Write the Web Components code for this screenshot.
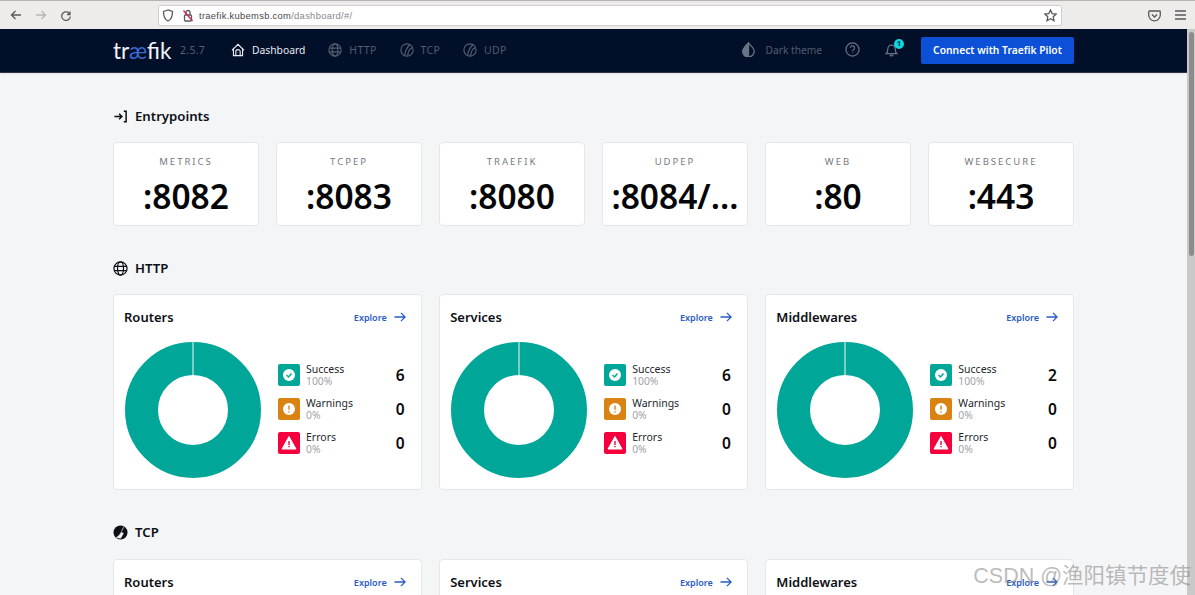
<!DOCTYPE html>
<html lang="en">
<head>
<meta charset="utf-8">
<title>Traefik</title>
<style>
html, body { margin:0; height:595px; overflow:hidden; }
body { font-family:"Noto Sans","Liberation Sans",sans-serif; background:#f4f5f7; display:flex; flex-direction:column; position:relative; }
.page { flex:1; display:flex; min-height:0; }
.scroller { flex:1; min-width:0; overflow:hidden; }
.wrap { width:961px; margin:0 auto; }
.row6 { display:grid; grid-template-columns:repeat(6,1fr); gap:17px; margin-bottom:32px; }
.row3 { display:grid; grid-template-columns:repeat(3,1fr); gap:17.5px; margin-bottom:32px; }
</style>
</head>
<body>
<browser-bar url-host="traefik.kubemsb.com" url-path="/dashboard/#/"></browser-bar>
<div class="page">
  <div class="scroller">
    <app-header></app-header>
    <div class="wrap">
      <section-title icon="entry" style="margin-top:33px">Entrypoints</section-title>
      <div class="row6">
        <entry-card name="METRICS" value=":8082"></entry-card>
        <entry-card name="TCPEP" value=":8083"></entry-card>
        <entry-card name="TRAEFIK" value=":8080"></entry-card>
        <entry-card name="UDPEP" value=":8084/…"></entry-card>
        <entry-card name="WEB" value=":80"></entry-card>
        <entry-card name="WEBSECURE" value=":443"></entry-card>
      </div>
      <section-title icon="globe">HTTP</section-title>
      <div class="row3">
        <stat-card title="Routers" ok="6"></stat-card>
        <stat-card title="Services" ok="6"></stat-card>
        <stat-card title="Middlewares" ok="2"></stat-card>
      </div>
      <section-title icon="tcp" style="margin-bottom:17px">TCP</section-title>
      <div class="row3">
        <stat-card title="Routers" ok="6"></stat-card>
        <stat-card title="Services" ok="6"></stat-card>
        <stat-card title="Middlewares" ok="2"></stat-card>
      </div>
    </div>
  </div>
  <page-scrollbar></page-scrollbar>
</div>
<water-mark>CSDN @渔阳镇节度使</water-mark>

<script>
const ball = '<circle cx="8" cy="8" r="7"/><path d="M11.300 2C8 5 5.800 9 5.300 14.400M13.800 5.500C10.800 7 9 10 8.800 14.800"/>';
const icons = {
  home: '<path d="M1.200 8.300 8 1.500l6.800 6.800M2.800 6.800v7.700h10.400V6.800M5.500 14.500V10a2.500 2.500 0 0 1 5 0v4.500"/>',
  globe: '<circle cx="8" cy="8" r="7"/><ellipse cx="8" cy="8" rx="3.200" ry="7"/><path d="M1.300 5.800h13.400M1.300 10.200h13.400"/>',
  tcp: ball,
  udp: ball,
  help: '<circle cx="8" cy="8" r="7"/><path d="M5.800 6.200a2.200 2.200 0 1 1 3.300 2c-.8.400-1.100.9-1.100 1.700M8 11.300v.8"/>',
  bell: '<path d="M2.500 12.300c1.200-1 1.600-2.300 1.600-5a3.900 3.900 0 0 1 7.800 0c0 2.700.4 4 1.600 5zM6.300 13.600a1.800 1.800 0 0 0 3.400 0"/>'
};

class BrowserBar extends HTMLElement {
  constructor() {
    super();
    const root = this.attachShadow({ mode: 'open' });
    root.innerHTML = `
    <style>
    :host { display:flex; align-items:center; height:29px; box-sizing:border-box; background:#edecea; border-top:1px solid #b4b4b4; flex:none; }
    svg { display:block; fill:none; stroke:#5a5a5c; stroke-width:1.300; flex:none; }
    .nav { display:flex; align-items:center; gap:13px; margin-left:10px; width:148px; }
    .url { width:904px; height:21px; box-sizing:border-box; background:#fff; border:1px solid #cfcfcf; border-radius:2px; display:flex; align-items:center; padding:0 4px 0 3px; font:9.400px "Liberation Sans",sans-serif; color:#88888b; }
    .url b { font-weight:400; color:#47474a; }
    .addr { margin-left:5px; flex:1; letter-spacing:.3px; }
    .tools { display:flex; align-items:center; margin-left:86px; gap:14px; }
    </style>
    <div class="nav">
      <svg width="12" height="12" viewBox="0 0 12 12"><path d="M11 6H1.500M5.500 2 1.500 6l4 4"/></svg>
      <svg width="12" height="12" viewBox="0 0 12 12" style="stroke:#b5b5b5"><path d="M1 6h9.500M6.500 2l4 4-4 4"/></svg>
      <svg width="12" height="12" viewBox="0 0 12 12"><path d="M10 2.500v3H7M10 5.500A4.300 4.300 0 1 0 10.300 7.500"/></svg>
    </div>
    <div class="url">
      <svg width="12" height="13" viewBox="0 0 12 13"><path d="M6 1 1.500 2.500c0 5 1 8 4.500 9.500 3.500-1.500 4.500-4.500 4.500-9.500z"/></svg>
      <svg width="12" height="13" viewBox="0 0 12 13" style="margin-left:8px"><rect x="2.500" y="6" width="7" height="6" rx="1"/><path d="M4 6V3.500a2 2 0 0 1 4 0V6"/><path d="M1.500 1.500 10.500 12" style="stroke:#d7264d"/></svg>
      <span class="addr"><b>${this.getAttribute('url-host')}</b>${this.getAttribute('url-path')}</span>
      <svg width="13" height="13" viewBox="0 0 13 13"><path d="m6.500 1 1.700 3.600 3.900.5-2.900 2.700.8 3.900-3.500-2-3.500 2 .8-3.900L.900 5.100l3.900-.5z"/></svg>
    </div>
    <div class="tools">
      <svg width="13" height="13" viewBox="0 0 13 13"><path d="M1.500 2h10a.8.8 0 0 1 .8.8V6a5.800 5.800 0 0 1-11.600 0V2.800a.8.8 0 0 1 .8-.8zM4 5.500 6.500 8 9 5.500"/></svg>
      <svg width="11" height="12" viewBox="0 0 11 12"><path d="M0 2h11M0 6h11M0 10h11"/></svg>
    </div>`;
  }
}
customElements.define('browser-bar', BrowserBar);

class NavItem extends HTMLElement {
  constructor() {
    super();
    const root = this.attachShadow({ mode: 'open' });
    root.innerHTML = `
    <style>
    :host { display:inline-flex; align-items:center; gap:7px; font-size:10.500px; letter-spacing:.3px; color:#525d6e; }
    :host([active]) { color:#e9ecf1; font-size:10.300px; letter-spacing:0; }
    svg { width:14px; height:14px; fill:none; stroke:currentColor; stroke-width:1.300; flex:none; }
    </style>
    <svg viewBox="0 0 16 16">${icons[this.getAttribute('icon')]}</svg><slot></slot>`;
  }
}
customElements.define('nav-item', NavItem);

class AppHeader extends HTMLElement {
  constructor() {
    super();
    const root = this.attachShadow({ mode: 'open' });
    root.innerHTML = `
    <style>
    :host { display:block; height:44px; box-sizing:border-box; background:#010f29; border-bottom:1px solid #2b3547; box-shadow:0 1px 3px rgba(0,0,0,.08); }
    .in { width:961px; height:43px; margin:0 auto; display:flex; align-items:center; }
    .logo { font:400 22.500px Lato,sans-serif; color:#f2f4f7; width:67px; padding-bottom:1px; }
    .logo i { font-style:normal; color:#3c6ad0; }
    .ver { font-size:10.500px; color:#566072; letter-spacing:.3px; width:51px; padding-bottom:2px; }
    nav { display:flex; gap:23px; padding-bottom:2px; }
    .right { margin-left:auto; display:flex; align-items:center; }
    .right svg { display:block; fill:none; stroke:#6a7484; stroke-width:1.300; }
    .theme { display:flex; align-items:center; gap:10px; font-size:10.200px; color:#525d6e; padding-bottom:2px; }
    .bell { position:relative; margin:0 22px 2px 24px; }
    .bell b { position:absolute; top:-3px; right:-5px; width:10px; height:10px; border-radius:50%; background:#0fd6dc; color:#0a2435; font:700 7px/10px "Noto Sans",sans-serif; text-align:center; }
    .pilot { width:153px; height:27px; box-sizing:border-box; padding-bottom:2px; border-radius:2px; background:#0c50d8; color:#fff; font-size:10.300px; font-weight:600; display:flex; align-items:center; justify-content:center; }
    </style>
    <div class="in">
      <div class="logo">tr<i>æ</i>fik</div>
      <div class="ver">2.5.7</div>
      <nav>
        <nav-item icon="home" active>Dashboard</nav-item>
        <nav-item icon="globe">HTTP</nav-item>
        <nav-item icon="tcp">TCP</nav-item>
        <nav-item icon="udp">UDP</nav-item>
      </nav>
      <div class="right">
        <div class="theme">
          <svg width="15" height="15" viewBox="0 0 15 15" style="margin-left:-1px"><path d="M7.500 1C5 3.800 1.800 6.500 1.800 9.200a5.700 5.700 0 0 0 11.400 0C13.200 6.500 10 3.800 7.500 1z"/><path d="M7.500 1C5 3.800 1.800 6.500 1.800 9.200a5.700 5.700 0 0 0 5.700 5.700z" fill="#6a7484"/></svg>
          <span>Dark theme</span>
        </div>
        <svg width="15" height="15" viewBox="0 0 16 16" style="margin:0 0 2px 23px">${icons.help}</svg>
        <div class="bell">
          <svg width="15" height="15" viewBox="0 0 16 16">${icons.bell}</svg>
          <b>1</b>
        </div>
        <div class="pilot">Connect with Traefik Pilot</div>
      </div>
    </div>`;
  }
}
customElements.define('app-header', AppHeader);

class SectionTitle extends HTMLElement {
  constructor() {
    super();
    const name = this.getAttribute('icon');
    const glyph = {
      entry: '<path d="M1.500 8h8M6.500 5l3 3-3 3M11.500 2.500h2.500v11h-2.500" stroke-width="1.600"/>',
      globe: icons.globe,
      tcp: '<circle cx="8" cy="8" r="7.500" fill="#0b0f16" stroke="none"/><path d="M12 1.800C10 4 9.500 6.500 8 9 7 10.800 5.500 12.300 3.500 13.200L8 14.200C9.500 12 10.500 10.500 11 8.500 9.800 8.400 9 8.300 8.500 8" fill="#f4f5f7" stroke="#f4f5f7" stroke-width=".6"/>'
    }[name];
    const root = this.attachShadow({ mode: 'open' });
    root.innerHTML = `
    <style>
    :host { display:flex; align-items:center; gap:7px; height:20px; margin-bottom:16px; font-size:13.200px; font-weight:600; color:#0b0f16; }
    svg { width:15px; height:15px; fill:none; stroke:#0b0f16; stroke-width:1.300; flex:none; }
    </style>
    <svg viewBox="0 0 16 16">${glyph}</svg><slot></slot>`;
  }
}
customElements.define('section-title', SectionTitle);

class EntryCard extends HTMLElement {
  constructor() {
    super();
    const root = this.attachShadow({ mode: 'open' });
    root.innerHTML = `
    <style>
    :host { display:flex; flex-direction:column; align-items:center; height:84px; box-sizing:border-box; background:#fff; border:1px solid #e6e7e9; border-radius:4px; padding-top:12px; overflow:hidden; }
    .n { font-size:9.500px; letter-spacing:2px; color:#767a80; line-height:14px; }
    .v { font-size:33.500px; font-weight:600; color:#050608; line-height:42px; margin-top:6px; white-space:nowrap; }
    </style>
    <div class="n">${this.getAttribute('name')}</div>
    <div class="v">${this.getAttribute('value')}</div>`;
  }
}
customElements.define('entry-card', EntryCard);

class StatRow extends HTMLElement {
  constructor() {
    super();
    const kind = this.getAttribute('kind');
    const glyph = {
      ok: '<circle cx="8" cy="8" r="6" fill="#fff"/><path d="m5.500 8 2 2 3-3.500" fill="none" stroke="#00a697" stroke-width="1.400"/>',
      warn: '<circle cx="8" cy="8" r="6" fill="#fff"/><path d="M8 4.500v4.200M8 10.300v1.200" fill="none" stroke="#da8212" stroke-width="1.400"/>',
      err: '<path d="M8 1.500 15 14H1z" fill="#fff" stroke="#fff" stroke-linejoin="round"/><path d="M8 6v4M8 11v1.300" fill="none" stroke="#f5003d" stroke-width="1.400"/>'
    }[kind];
    const bg = { ok:'#00a697', warn:'#da8212', err:'#f5003d' }[kind];
    const root = this.attachShadow({ mode: 'open' });
    root.innerHTML = `
    <style>
    :host { display:flex; align-items:center; height:22px; }
    .tile { width:22px; height:22px; border-radius:2px; background:${bg}; display:flex; align-items:center; justify-content:center; flex:none; }
    svg { width:16px; height:16px; display:block; }
    .t { margin-left:6px; flex:1; }
    .l { font-size:10.500px; line-height:12px; color:#24272c; }
    .p { font-size:10.300px; line-height:12.500px; color:#a0a3a8; }
    .c { font-size:15.500px; font-weight:600; color:#08090b; }
    </style>
    <div class="tile"><svg viewBox="0 0 16 16">${glyph}</svg></div>
    <div class="t"><div class="l">${this.getAttribute('label')}</div><div class="p">${this.getAttribute('pct')}</div></div>
    <div class="c">${this.getAttribute('count')}</div>`;
  }
}
customElements.define('stat-row', StatRow);

class StatCard extends HTMLElement {
  constructor() {
    super();
    const root = this.attachShadow({ mode: 'open' });
    root.innerHTML = `
    <style>
    :host { display:block; height:196px; box-sizing:border-box; background:#fff; border:1px solid #e6e7e9; border-radius:4px; padding:0 15px 0 10px; }
    .top { display:flex; justify-content:space-between; align-items:center; height:44px; }
    h3 { margin:0; font-size:13px; font-weight:600; color:#0d1014; }
    .ex { display:flex; align-items:center; gap:7px; font-size:9px; font-weight:600; color:#2a5cc4; }
    .ex svg { width:12px; height:12px; fill:none; stroke:#2a5cc4; stroke-width:1.400; }
    .body { display:flex; align-items:center; margin-top:3px; }
    .donut { width:136px; height:136px; flex:none; display:block; margin-left:1px; }
    .rows { flex:1; margin:0 1px 2px 17px; display:flex; flex-direction:column; gap:12px; }
    </style>
    <div class="top">
      <h3>${this.getAttribute('title')}</h3>
      <div class="ex">Explore <svg viewBox="0 0 13 12"><path d="M0.500 6h11.500M7.500 1.500 12 6l-4.500 4.500"/></svg></div>
    </div>
    <div class="body">
      <svg class="donut" viewBox="0 0 136 136">
        <circle cx="68" cy="68" r="51.500" fill="none" stroke="#00a697" stroke-width="33"/>
        <path d="M68 0v35" stroke="#f2f7f6" stroke-width="1"/>
      </svg>
      <div class="rows">
        <stat-row kind="ok" label="Success" pct="100%" count="${this.getAttribute('ok')}"></stat-row>
        <stat-row kind="warn" label="Warnings" pct="0%" count="0"></stat-row>
        <stat-row kind="err" label="Errors" pct="0%" count="0"></stat-row>
      </div>
    </div>`;
    this.removeAttribute('title');
  }
}
customElements.define('stat-card', StatCard);

class PageScrollbar extends HTMLElement {
  constructor() {
    super();
    const root = this.attachShadow({ mode: 'open' });
    root.innerHTML = `
    <style>
    :host { display:block; width:8px; flex:none; background:#c9c9c9; padding:3px 1px 0 2px; box-sizing:border-box; }
    div { height:224px; background:#8c8c8c; border-radius:3px; }
    </style>
    <div></div>`;
  }
}
customElements.define('page-scrollbar', PageScrollbar);

class WaterMark extends HTMLElement {
  constructor() {
    super();
    const root = this.attachShadow({ mode: 'open' });
    root.innerHTML = `
    <style>
    :host { position:absolute; right:4px; bottom:6px; font:21.500px "Liberation Sans","Noto Sans CJK SC",sans-serif; color:rgba(130,130,130,.55); white-space:nowrap; }
    </style>
    <slot></slot>`;
  }
}
customElements.define('water-mark', WaterMark);
</script>
</body>
</html>
